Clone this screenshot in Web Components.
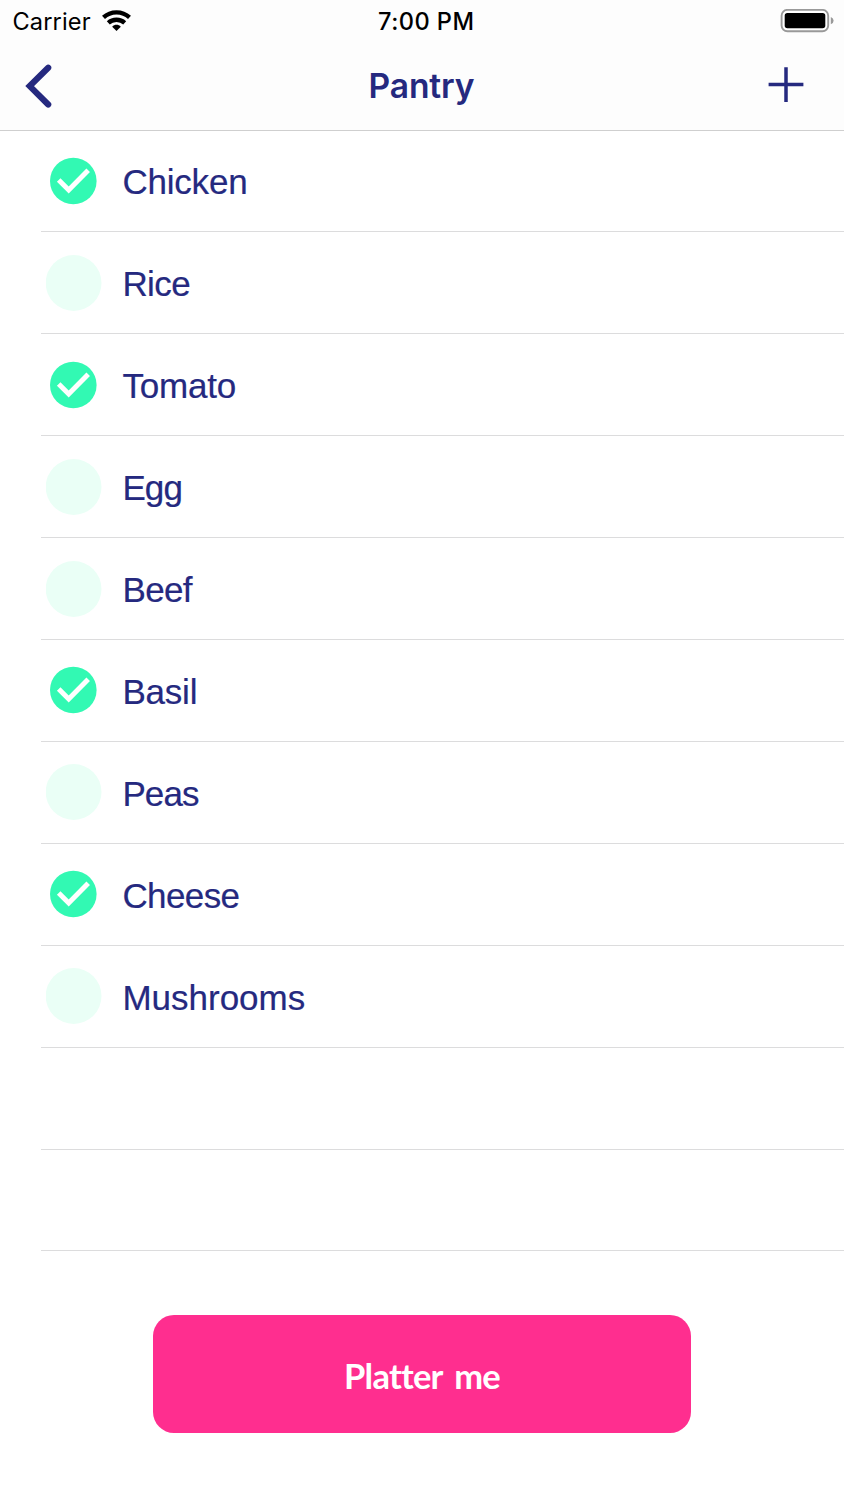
<!DOCTYPE html>
<html lang="en"><head><meta charset="utf-8"><title>Pantry</title>
<style>html,body{margin:0;background:#fff}</style></head><body>
<pantry-app></pantry-app>
<script>
const define = (name, html) => customElements.define(name, class extends HTMLElement {
  constructor() {
    super();
    const t = document.createElement('template');
    t.innerHTML = html;
    this.attachShadow({mode: 'open'}).append(t.content.cloneNode(true));
  }
});
define('status-bar', `<style>
:host{display:grid;grid-template-columns:1fr auto 1fr;align-items:center;height:42px;box-sizing:border-box;padding:0 10px 0 12.5px;font:400 23.6px/42px Inter,sans-serif;color:#000}
.l{display:flex;align-items:center;gap:11px}.c{letter-spacing:.13px}
.c,.t{padding-top:2px;line-height:40px}
.t{font-weight:500;letter-spacing:.45px;padding-left:6px}.r{justify-self:end}svg{display:block}
</style><div class="l"><span class="c">Carrier</span>
<svg width="29" height="22" viewBox="0 0 29 22"><g fill="none" stroke="#000" stroke-width="4.3"><path d="M1.5 7.4C8.7.6 20.3.6 27.5 7.4"/><path d="M6.3 12.9C10.7 8.7 18.3 8.7 22.7 12.9"/></g><path d="M10.2 16.7C12.5 14.1 16.5 14.1 18.8 16.7L14.5 20.9Z"/></svg></div>
<span class="t">7:00 PM</span>
<svg class="r" width="54" height="24" viewBox="0 0 54 24"><rect x="1.6" y=".9" width="46.6" height="21.4" rx="5.8" fill="#fff" stroke="#999" stroke-width="1.9"/><rect x="4.7" y="3.9" width="40.6" height="15.4" rx="2.7"/><path d="M50.8 8.1Q53.6 9.1 53.6 11.7Q53.6 14.3 50.8 15.3Z" fill="#999"/></svg>`);
define('nav-bar', `<style>
:host{display:grid;grid-template-columns:1fr auto 1fr;align-items:center;height:88px;box-sizing:border-box;padding:0 38px 0 24px;color:#25297f;font:600 33.6px/88px Inter,sans-serif}
svg{display:block}.r{justify-self:end}.t{padding-left:13px;letter-spacing:-.15px}
</style><svg width="30" height="46" viewBox="0 0 30 46"><path d="M24.2 4.7L5.7 23.1L24.2 41.5" fill="none" stroke="#25297f" stroke-width="6.2" stroke-linecap="round" stroke-linejoin="miter"/></svg>
<span class="t"><slot></slot></span>
<svg class="r" width="38" height="38" viewBox="0 0 38 38"><path d="M.6 17.6H35.4M18 .2V35" fill="none" stroke="#25297f" stroke-width="3.5"/></svg>`);
define('check-mark', `<style>:host{display:block;width:56px;height:56px}
svg{display:block}.on{display:none}:host([checked]) .on{display:block}:host([checked]) .off{display:none}
</style><svg width="56" height="56" viewBox="0 0 56 56"><circle class="off" cx="27.6" cy="28" r="27.9" fill="#eafff6"/><g class="on"><circle cx="27.3" cy="28" r="23.3" fill="#32f9b3"/><path d="M12.7 26.9L22.7 36.9L42.2 17.3" fill="none" stroke="#fff" stroke-width="5"/></g></svg>`);
customElements.define('pantry-row', class extends HTMLElement {
  constructor() {
    super();
    this.attachShadow({mode: 'open'}).innerHTML = `<style>
:host{display:flex;align-items:center;height:101.92px;box-sizing:border-box;margin-left:41px;padding-left:5px;gap:20.4px;border-bottom:1px solid #dcdcdd;color:#25297f;font:400 35px/40px "Liberation Sans",sans-serif;-webkit-text-stroke:.2px #25297f}
span{padding-top:2.8px;letter-spacing:var(--track,0)}</style>${this.hasAttribute('empty') ? '' : `<check-mark ${this.hasAttribute('checked') ? 'checked' : ''}></check-mark>`}<span><slot></slot></span>`;
  }
});
define('primary-button', `<style>:host{display:block;width:538px;margin:63.5px auto 0 153px}
button{display:block;width:100%;height:118px;border:0;border-radius:21px;background:#ff2e8f;color:#fff;font:700 34.5px/118px Lato,sans-serif;padding:2px 0 0;letter-spacing:-.75px;word-spacing:4.5px}
</style><button><slot></slot></button>`);
define('pantry-app', `<style>:host{display:block;width:844px;height:1500px;overflow:hidden;background:#fff}
header{background:#fdfdfd;border-bottom:1px solid #cfcfcf;height:130px}
main{margin-top:-.5px}
.a{--track:-.2px}.b{--track:-.6px}.c{--track:-.9px}
</style><header><status-bar></status-bar><nav-bar>Pantry</nav-bar></header>
<main><pantry-row checked class="a">Chicken</pantry-row><pantry-row class="b">Rice</pantry-row><pantry-row checked class="a">Tomato</pantry-row><pantry-row class="c">Egg</pantry-row><pantry-row class="b">Beef</pantry-row><pantry-row checked class="a">Basil</pantry-row><pantry-row class="c">Peas</pantry-row><pantry-row checked class="b">Cheese</pantry-row><pantry-row>Mushrooms</pantry-row><pantry-row empty></pantry-row><pantry-row empty></pantry-row></main>
<primary-button>Platter me</primary-button>`);
</script></body></html>
